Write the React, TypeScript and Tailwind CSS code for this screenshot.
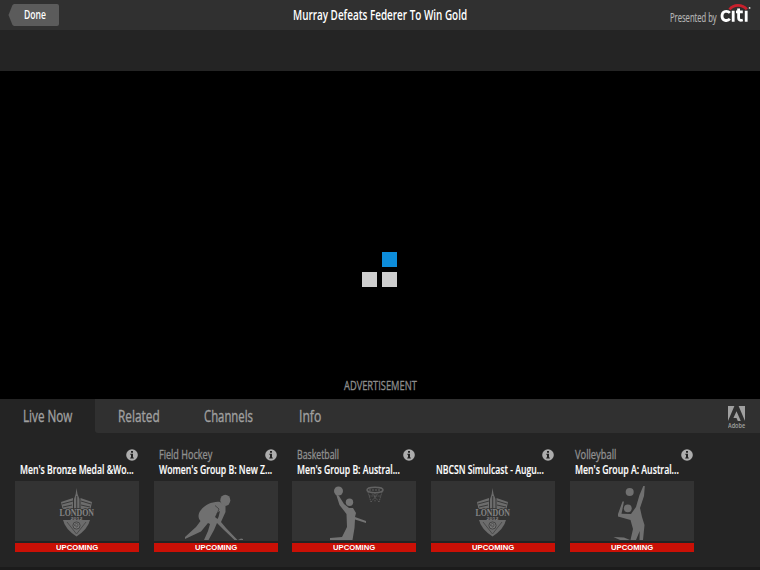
import { useLayoutEffect, useRef, useState } from "react";

type FitProps = { text: string; width: number; className?: string };

/* Condensed label: squeezes the text horizontally into the given width. */
function Condensed({ text, width, className = "" }: FitProps) {
  const ref = useRef<HTMLSpanElement>(null);
  const [scale, setScale] = useState(0.75);
  useLayoutEffect(() => {
    if (ref.current) setScale(width / ref.current.offsetWidth);
  }, [text, width]);
  return (
    <span className={"block whitespace-nowrap " + className} style={{ width }}>
      <span ref={ref} className="inline-block origin-left" style={{ transform: `scaleX(${scale})` }}>
        {text}
      </span>
    </span>
  );
}

function CitiLogo() {
  return (
    <svg width="32" height="20" viewBox="0 0 32 20" fill="none">
      <path d="M9.5 6.4C13.5 1 22.5 1 26.8 6.4" stroke="#c8202c" strokeWidth="2.6" />
      <g stroke="#fff" strokeWidth="2.8">
        <path d="M9.9 9.9C7.4 7.2 2 7.9 2 12.9S7.4 18.6 9.9 15.9" />
        <path d="M13.2 7.8V18.8M26.2 7.8V18.8M18.6 5.4V15Q18.6 18.1 22.8 17M16 8.9H22.8" />
      </g>
      <circle cx="29.6" cy="4.9" r="0.9" fill="#ddd" />
    </svg>
  );
}

function AdobeLogo() {
  return (
    <svg width="17" height="16" viewBox="0 0 17 16">
      <path d="M0 0H6.4L0 15ZM10.6 0H17V15ZM8.5 5.2 12.8 15H9.8L8.5 12H5.4Z" fill="#a0a0a0" />
    </svg>
  );
}

function InfoIcon() {
  return (
    <svg width="12" height="12" viewBox="0 0 12 12">
      <circle cx="6" cy="6" r="5.8" fill="#adadad" />
      <path d="M5 2H7V3.7H5ZM4.3 4.8H7V8.5H7.8V9.6H4.2V8.5H5V5.8H4.3Z" fill="#222" />
    </svg>
  );
}

function London() {
  return (
    <svg width="124" height="60" viewBox="0 0 124 60">
      <g fill="#6c6c6c">
        <path d="M61.5 7 62.5 13 64.5 18V28H59V18L60.7 13Z" />
        <path d="M58 17 46 21 47.5 28H58ZM65.5 17 77 21 75.5 28H65.5Z" />
        <path d="M48 39H75Q73 48 61.5 55.5Q50 48 48 39Z" />
      </g>
      <path d="M47 23 58 20M48 26 57 24M66 20 76 23M66 24 75 26M61.7 15V27" stroke="#393939" strokeWidth="1" />
      <path d="M52 41 61.5 53 71 41" stroke="#4b4b4b" fill="none" />
      <circle cx="61.5" cy="44.5" r="3.6" fill="#777" stroke="#444" />
      <path d="M59.5 45C59.5 42 63 41.5 63 44S60 47 61 44" stroke="#444" fill="none" strokeWidth=".8" />
      <text x="44.5" y="35.3" textLength="34.5" lengthAdjust="spacingAndGlyphs" fill="#858585" stroke="#343434" strokeWidth="1.5" paintOrder="stroke" className="font-['Liberation_Serif',serif] text-[10.5px] font-bold">LONDON</text>
      <text x="55.5" y="39.2" textLength="12" lengthAdjust="spacingAndGlyphs" fill="#858585" className="font-['Liberation_Sans',sans-serif] text-[4px] font-bold">2012</text>
    </svg>
  );
}

function Hockey() {
  return (
    <svg width="124" height="60" viewBox="0 0 124 60" fill="#707070">
      <ellipse cx="71.3" cy="19.3" rx="5" ry="5.6" />
      <path d="M66 21C58 20 49 25 45.5 31C43.5 36 45 38 46.5 40L42 46 31 56V58L47 50.5 54 42 56 43 54 50 50 59H54.5L60 49 63 42 70 49 80.5 59H83.5L72 47 67 41 71.5 31 71.5 25ZM61 36 63 32 66 30 64.5 36 63.5 38Z" fillRule="evenodd" />
      <path d="M84 59 87 57.5 89 58V59Z" />
      <path d="M61 24.5 65 28 63 33" stroke="#333" fill="none" strokeWidth=".7" />
    </svg>
  );
}

function Basketball() {
  return (
    <svg width="124" height="60" viewBox="0 0 124 60" fill="#747474">
      <circle cx="46.5" cy="10" r="4.5" />
      <circle cx="57.5" cy="21.3" r="3.7" />
      <path d="M44 13 47 15 52 23 57 27 61 27 64 32 63 36 74 40V42L63 38.5 62.5 47 60.5 59H38V57L50 56 55 46 54.5 33 47.5 24Z" />
      <g fill="none" stroke="#626262">
        <ellipse cx="83" cy="9" rx="8" ry="2.7" strokeWidth="1.5" />
        <path d="M76 11 79 21M79 11 87 21M83 12V21M87 11 79 21M90 11 87 21M77 15H89" strokeWidth=".8" strokeDasharray="1.5 .8" />
        <path d="M77 9H89" strokeDasharray="2 1" />
      </g>
    </svg>
  );
}

function Volleyball() {
  return (
    <svg width="124" height="60" viewBox="0 0 124 60" fill="#707070">
      <circle cx="59.7" cy="11" r="4" />
      <circle cx="57.8" cy="27.3" r="3.9" />
      <path d="M73.3 5H74.8L74 15 70 27 72 36 74.5 44 73 59H69.5L69.7 50 66 59H60.5L63 48 60.5 39 48 35.5V33L52.5 20.5H54L51.5 32.8 61 33 66 26 69.5 14Z" />
      <path d="M43.5 56 54 56.5 60 59H50Z" />
    </svg>
  );
}

const cards = [
  { sport: "", sw: 0, title: "Men's Bronze Medal &Wo...", tw: 114, Art: London },
  { sport: "Field Hockey", sw: 53, title: "Women's Group B: New Z...", tw: 113, Art: Hockey },
  { sport: "Basketball", sw: 42, title: "Men's Group B: Austral...", tw: 103, Art: Basketball },
  { sport: "", sw: 0, title: "NBCSN Simulcast - Augu...", tw: 108, Art: London },
  { sport: "Volleyball", sw: 41, title: "Men's Group A: Austral...", tw: 104, Art: Volleyball },
];

const tabs = [
  { name: "Related", width: 42, pad: "w-[86px]" },
  { name: "Channels", width: 49, pad: "w-[95px]" },
  { name: "Info", width: 22, pad: "w-[80px]" },
];

export default function App() {
  return (
    <div className="flex h-[570px] w-[760px] flex-col overflow-hidden bg-[#242424] font-['Open_Sans',sans-serif]">
      <header className="grid h-[30px] shrink-0 grid-cols-[200px_1fr_200px] bg-[#303030]">
        <div className="relative mt-1 ml-[8px] h-[22px] w-[51px]">
          <svg className="absolute inset-0" width="51" height="22" viewBox="0 0 51 22">
            <path d="M6 0H49Q51 0 51 2V20Q51 22 49 22H6L4.5 21 0.5 11 4.5 1Z" fill="#5b5b5b" />
          </svg>
          <Condensed text="Done" width={22} className="relative ml-[16px] text-[12.5px] leading-[21px] font-semibold text-white" />
        </div>
        <div className="flex justify-center">
          <Condensed text="Murray Defeats Federer To Win Gold" width={174} className="text-[13.5px] leading-[30px] font-semibold text-white" />
        </div>
        <div className="flex pl-[109.5px]">
          <Condensed text="Presented by" width={47} className="text-[12px] leading-[35px] text-[#b4b4b4] [-webkit-text-stroke:0.2px]" />
          <div className="mt-[3px] ml-[3px]"><CitiLogo /></div>
        </div>
      </header>
      <div className="h-[41px] shrink-0" />
      <main className="flex h-[328px] shrink-0 flex-col items-center bg-black">
        <div className="mt-[181px] mr-px grid grid-cols-[15px_15px] grid-rows-[15px_15px] gap-[5px]">
          <span className="col-start-2 bg-[#0d8ddb]" />
          <span className="col-start-1 row-start-2 bg-[#cecece]" />
          <span className="bg-[#cecece]" />
        </div>
        <Condensed text="ADVERTISEMENT" width={73} className="mt-[88px] text-[13px] leading-[21px] text-[#8c8c8c] [-webkit-text-stroke:0.35px]" />
      </main>
      <nav className="flex h-[34px] shrink-0 text-[15.5px] leading-[34px] text-[#a0a0a0] [-webkit-text-stroke:0.35px]">
        <div className="w-[95px] pl-[23px]"><Condensed text="Live Now" width={49} /></div>
        <div className="flex flex-1 rounded-bl-[3px] bg-[#303030] pl-[23px]">
          {tabs.map((t) => (
            <div key={t.name} className={t.pad}><Condensed text={t.name} width={t.width} /></div>
          ))}
          <div className="mt-[7px] mr-[15px] ml-auto flex flex-col items-center">
            <AdobeLogo />
            <Condensed text="Adobe" width={17} className="text-[7.5px] leading-[7px] font-semibold text-[#a0a0a0] [-webkit-text-stroke:0px]" />
          </div>
        </div>
      </nav>
      <section className="flex flex-1 gap-[14.7px] pt-[15px] pl-[15px]">
        {cards.map(({ sport, sw, title, tw, Art }, i) => (
          <article key={i} className="w-[124px] shrink-0">
            <div className="flex h-[14px] items-center justify-between pr-px pl-[5px]">
              {sport ? (
                <Condensed text={sport} width={sw} className="text-[12.5px] leading-[14px] text-[#909090] [-webkit-text-stroke:0.35px]" />
              ) : (
                <span />
              )}
              <InfoIcon />
            </div>
            <Condensed text={title} width={tw} className="ml-[5px] h-[19px] text-[12px] leading-[15px] font-semibold text-white [-webkit-text-stroke:0.15px]" />
            <div className="h-[60px] bg-[#333]"><Art /></div>
            <div className="mt-[2px] flex h-[9px] justify-center bg-[#ca1006]">
              <Condensed text="UPCOMING" width={42} className="font-['Liberation_Sans',sans-serif] text-[7.5px] leading-[9px] font-bold text-white" />
            </div>
          </article>
        ))}
      </section>
      <div className="h-[3px] bg-[#1b1b1b]" />
    </div>
  );
}
